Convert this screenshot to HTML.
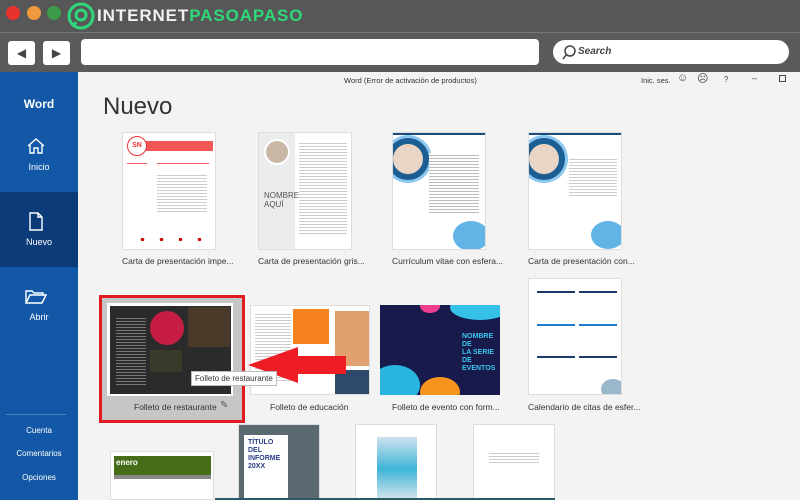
<!DOCTYPE html>
<html><head><meta charset="utf-8"><style>
*{margin:0;padding:0;box-sizing:border-box}
body{width:800px;height:500px;overflow:hidden;position:relative;background:#f3f3f3;font-family:"Liberation Sans",sans-serif}
.a{position:absolute}
.lbl{position:absolute;font-size:8.5px;color:#333;white-space:nowrap}
.card{position:absolute;background:#fff;border:1px solid #ddd;overflow:hidden}
.side{color:#fff;font-size:9px;text-align:center;width:78px;position:absolute;left:0}
</style></head><body>
<div class="a" style="left:0;top:0;width:800px;height:33px;background:#575757"></div>
<div class="a" style="left:0;top:32px;width:800px;height:1px;background:#777"></div>
<div class="a" style="left:6px;top:6px;width:14px;height:14px;border-radius:50%;background:#e8322e"></div>
<div class="a" style="left:27px;top:6px;width:14px;height:14px;border-radius:50%;background:#f09a3e"></div>
<div class="a" style="left:47px;top:6px;width:14px;height:14px;border-radius:50%;background:#3e9b4a"></div>
<svg class="a" style="left:67px;top:2px" width="28" height="28" viewBox="0 0 28 28"><circle cx="14" cy="14" r="12" fill="none" stroke="#2ed87a" stroke-width="3"/><circle cx="14" cy="13" r="5" fill="none" stroke="#2ed87a" stroke-width="3"/><path d="M9 20 L6 25" stroke="#2ed87a" stroke-width="3"/></svg>
<div class="a" style="left:97px;top:6px;font-size:17px;font-weight:bold;color:#f0f0f0;letter-spacing:0.9px">INTERNET<span style="color:#2ed87a">PASOAPASO</span></div>
<div class="a" style="left:0;top:33px;width:800px;height:39px;background:#5a5a5a"></div>
<div class="a" style="left:8px;top:41px;width:27px;height:24px;background:#fff;border-radius:3px;font-size:12px;color:#444;text-align:center;line-height:24px">◀</div>
<div class="a" style="left:43px;top:41px;width:27px;height:24px;background:#fff;border-radius:3px;font-size:12px;color:#444;text-align:center;line-height:24px">▶</div>
<div class="a" style="left:81px;top:39px;width:458px;height:26px;background:#fff;border-radius:4px"></div>
<div class="a" style="left:553px;top:40px;width:236px;height:24px;background:#fff;border-radius:12px"></div>
<svg class="a" style="left:561px;top:45px" width="16" height="16"><circle cx="9" cy="6" r="5" fill="none" stroke="#444" stroke-width="1.5"/><path d="M5 10 L2 14" stroke="#444" stroke-width="1.5"/></svg>
<div class="a" style="left:578px;top:46px;font-size:10px;font-style:italic;color:#444;font-weight:bold">Search</div>
<div class="a" style="left:0;top:72px;width:78px;height:428px;background:#1258a6"></div>
<div class="a" style="left:0;top:192px;width:78px;height:75px;background:#0c3b7a"></div>
<div class="side" style="top:97px;font-size:12px;font-weight:bold">Word</div>
<svg class="a" style="left:26px;top:137px" width="20" height="18"><path d="M2 9 L10 2 L18 9 M4 7 V16 H8 V11 H12 V16 H16 V7" fill="none" stroke="#fff" stroke-width="1.4"/></svg>
<div class="side" style="top:162px">Inicio</div>
<svg class="a" style="left:28px;top:212px" width="16" height="20"><path d="M2 1 H10 L14 5 V18 H2 Z M10 1 V5 H14" fill="none" stroke="#fff" stroke-width="1.4"/></svg>
<div class="side" style="top:237px">Nuevo</div>
<svg class="a" style="left:25px;top:289px" width="22" height="16"><path d="M1 14 V2 H7 L9 4 H18 V6 M1 14 L5 6 H21 L17 14 Z" fill="none" stroke="#fff" stroke-width="1.4"/></svg>
<div class="side" style="top:312px">Abrir</div>
<div class="a" style="left:6px;top:414px;width:60px;height:1px;background:#4c84c4"></div>
<div class="side" style="top:426px;font-size:8px">Cuenta</div>
<div class="side" style="top:449px;font-size:8px">Comentarios</div>
<div class="side" style="top:473px;font-size:8px">Opciones</div>
<div class="a" style="left:344px;top:76px;font-size:7.5px;color:#333">Word (Error de activación de productos)</div>
<div class="a" style="left:641px;top:76px;font-size:7.5px;color:#333">Inic. ses.</div>
<div class="a" style="left:677px;top:72px;font-size:11px;color:#444">☺</div>
<div class="a" style="left:697px;top:72px;font-size:11px;color:#444">☹</div>
<div class="a" style="left:724px;top:75px;font-size:8px;color:#444">?</div>
<div class="a" style="left:752px;top:73px;font-size:9px;color:#444">–</div>
<div class="a" style="left:779px;top:75px;width:7px;height:7px;border:1px solid #444"></div>
<div class="a" style="left:103px;top:93px;font-size:24px;color:#333;font-weight:300">Nuevo</div>
<div class="card" style="left:122px;top:132px;width:94px;height:118px">
 <div class="a" style="left:20px;top:8px;width:70px;height:10px;background:#f25555"></div>
 <div class="a" style="left:4px;top:3px;width:20px;height:20px;border-radius:50%;border:1.5px solid #e33;background:#fff;font-size:7px;color:#e33;font-weight:bold;text-align:center;line-height:17px">SN</div>
 <div class="a" style="left:4px;top:30px;width:20px;height:1px;background:#e55"></div>
 <div class="a" style="left:34px;top:30px;width:52px;height:1px;background:#e55"></div>
 <div class="a" style="left:34px;top:40px;width:50px;height:40px;background:repeating-linear-gradient(#fff 0 2px,#ccc 2px 3px)"></div>
 <div class="a" style="left:10px;top:105px;width:75px;height:3px;background:radial-gradient(circle,#c00 1.5px,transparent 2px) 0 0/19px 3px"></div>
</div>
<div class="lbl" style="left:122px;top:256px">Carta de presentación impe...</div>
<div class="card" style="left:258px;top:132px;width:94px;height:118px">
 <div class="a" style="left:0;top:0;width:36px;height:118px;background:#ececec"></div>
 <div class="a" style="left:5px;top:6px;width:26px;height:26px;border-radius:50%;background:#c9b8a8;border:2px solid #fff"></div>
 <div class="a" style="left:5px;top:58px;font-size:8px;color:#555;line-height:9px">NOMBRE<br>AQUÍ</div>
 <div class="a" style="left:40px;top:8px;width:48px;height:95px;background:repeating-linear-gradient(#fff 0 2px,#ccc 2px 3px)"></div>
</div>
<div class="lbl" style="left:258px;top:256px">Carta de presentación gris...</div>
<div class="card" style="left:392px;top:132px;width:94px;height:118px">
 <div class="a" style="left:0;top:0;width:94px;height:2px;background:#1d4e7a"></div>
 <div class="a" style="left:-6px;top:5px;width:42px;height:42px;border-radius:50%;border:6px solid #1b5e93;background:#e9d5c5;box-shadow:0 0 0 3px #8cc8ee"></div>
 <div class="a" style="left:36px;top:20px;width:50px;height:60px;background:repeating-linear-gradient(#fff 0 2px,#bbb 2px 3px)"></div>
 <div class="a" style="left:60px;top:88px;width:36px;height:30px;border-radius:50%;background:#62b4e6"></div>
</div>
<div class="lbl" style="left:392px;top:256px">Currículum vitae con esfera...</div>
<div class="card" style="left:528px;top:132px;width:94px;height:118px">
 <div class="a" style="left:0;top:0;width:94px;height:2px;background:#1d4e7a"></div>
 <div class="a" style="left:-6px;top:5px;width:42px;height:42px;border-radius:50%;border:6px solid #1b5e93;background:#e9d5c5;box-shadow:0 0 0 3px #8cc8ee"></div>
 <div class="a" style="left:40px;top:24px;width:48px;height:40px;background:repeating-linear-gradient(#fff 0 2px,#ccc 2px 3px)"></div>
 <div class="a" style="left:62px;top:88px;width:34px;height:28px;border-radius:50%;background:#62b4e6"></div>
</div>
<div class="lbl" style="left:528px;top:256px">Carta de presentación con...</div>
<div class="a" style="left:99px;top:295px;width:146px;height:128px;border:3px solid #e01b22;background:#c6c6c6"></div>
<div class="a" style="left:107px;top:303px;width:126px;height:93px;background:#fff"></div>
<div class="a" style="left:110px;top:306px;width:121px;height:88px;background:#2b2b2b"></div>
<div class="a" style="left:116px;top:316px;width:30px;height:70px;background:repeating-linear-gradient(#2b2b2b 0 2px,#777 2px 3px)"></div>
<div class="a" style="left:150px;top:311px;width:34px;height:34px;border-radius:50%;background:#c81d42"></div>
<div class="a" style="left:188px;top:307px;width:42px;height:40px;background:#4a3a2a"></div>
<div class="a" style="left:150px;top:350px;width:32px;height:22px;background:#3a3a2a"></div>
<div class="lbl" style="left:134px;top:402px">Folleto de restaurante</div>
<div class="a" style="left:220px;top:400px;font-size:10px;color:#555">✎</div>
<div class="card" style="left:250px;top:305px;width:120px;height:90px">
 <div class="a" style="left:4px;top:6px;width:36px;height:70px;background:repeating-linear-gradient(#fff 0 2px,#ccc 2px 3px)"></div>
 <div class="a" style="left:42px;top:3px;width:36px;height:35px;background:#f5821f"></div>
 <div class="a" style="left:84px;top:5px;width:34px;height:55px;background:#e0a070"></div>
 <div class="a" style="left:84px;top:64px;width:34px;height:24px;background:#2e4a6a"></div>
</div>
<div class="lbl" style="left:270px;top:402px">Folleto de educación</div>
<div class="card" style="left:380px;top:305px;width:120px;height:90px;background:#171a4a;border:none">
 <div class="a" style="left:-10px;top:60px;width:50px;height:40px;border-radius:50%;background:#29b5e0"></div>
 <div class="a" style="left:70px;top:-10px;width:60px;height:25px;border-radius:50%;background:#35c0e5"></div>
 <div class="a" style="left:40px;top:-6px;width:20px;height:14px;border-radius:50%;background:#ef3e8e"></div>
 <div class="a" style="left:40px;top:72px;width:40px;height:30px;border-radius:50%;background:#f7941d"></div>
 <div class="a" style="left:82px;top:28px;font-size:7px;color:#3ac6ef;font-weight:bold;line-height:8px">NOMBRE DE<br>LA SERIE DE<br>EVENTOS</div>
</div>
<div class="lbl" style="left:392px;top:402px">Folleto de evento con form...</div>
<div class="card" style="left:528px;top:278px;width:94px;height:117px">
 <div class="a" style="left:8px;top:12px;width:38px;height:2px;background:#1f3a6a"></div>
 <div class="a" style="left:50px;top:12px;width:38px;height:2px;background:#1f3a6a"></div>
 <div class="a" style="left:8px;top:45px;width:38px;height:2px;background:#1c7ad0"></div>
 <div class="a" style="left:50px;top:45px;width:38px;height:2px;background:#1c7ad0"></div>
 <div class="a" style="left:8px;top:77px;width:38px;height:2px;background:#1f3a6a"></div>
 <div class="a" style="left:50px;top:77px;width:38px;height:2px;background:#1f3a6a"></div>
 <div class="a" style="left:72px;top:100px;width:24px;height:20px;border-radius:50%;background:#9bb7cc"></div>
</div>
<div class="lbl" style="left:528px;top:402px">Calendario de citas de esfer...</div>
<svg class="a" style="left:240px;top:340px" width="110" height="50"><path d="M8 25 L58 7 L58 16 L106 16 L106 34 L58 34 L58 43 Z" fill="#ee1c24"/></svg>
<div class="a" style="left:191px;top:371px;background:#fff;border:1px solid #bbb;font-size:8px;color:#333;padding:2px 3px">Folleto de restaurante</div>
<div class="card" style="left:110px;top:451px;width:104px;height:49px">
 <div class="a" style="left:3px;top:4px;width:97px;height:19px;background:#476d1a;color:#fff;font-size:8px;font-weight:bold;padding:2px">enero</div>
 <div class="a" style="left:3px;top:23px;width:97px;height:4px;background:#888"></div>
</div>
<div class="card" style="left:238px;top:424px;width:82px;height:76px;background:#5a6a70">
 <div class="a" style="left:5px;top:10px;width:44px;height:66px;background:#fff;padding:4px;font-size:7px;color:#2a3f8a;font-weight:bold;line-height:8px">TÍTULO DEL INFORME 20XX</div>
</div>
<div class="card" style="left:355px;top:424px;width:82px;height:76px">
 <div class="a" style="left:21px;top:12px;width:40px;height:64px;background:linear-gradient(#cfe2ee,#3fb5d8,#dbe8ee)"></div>
</div>
<div class="card" style="left:473px;top:424px;width:82px;height:76px">
 <div class="a" style="left:15px;top:26px;width:50px;height:12px;background:repeating-linear-gradient(#fff 0 2px,#ccc 2px 3px)"></div>
</div>
<div class="a" style="left:215px;top:498px;width:340px;height:2px;background:#2a5a66"></div>
</body></html>
